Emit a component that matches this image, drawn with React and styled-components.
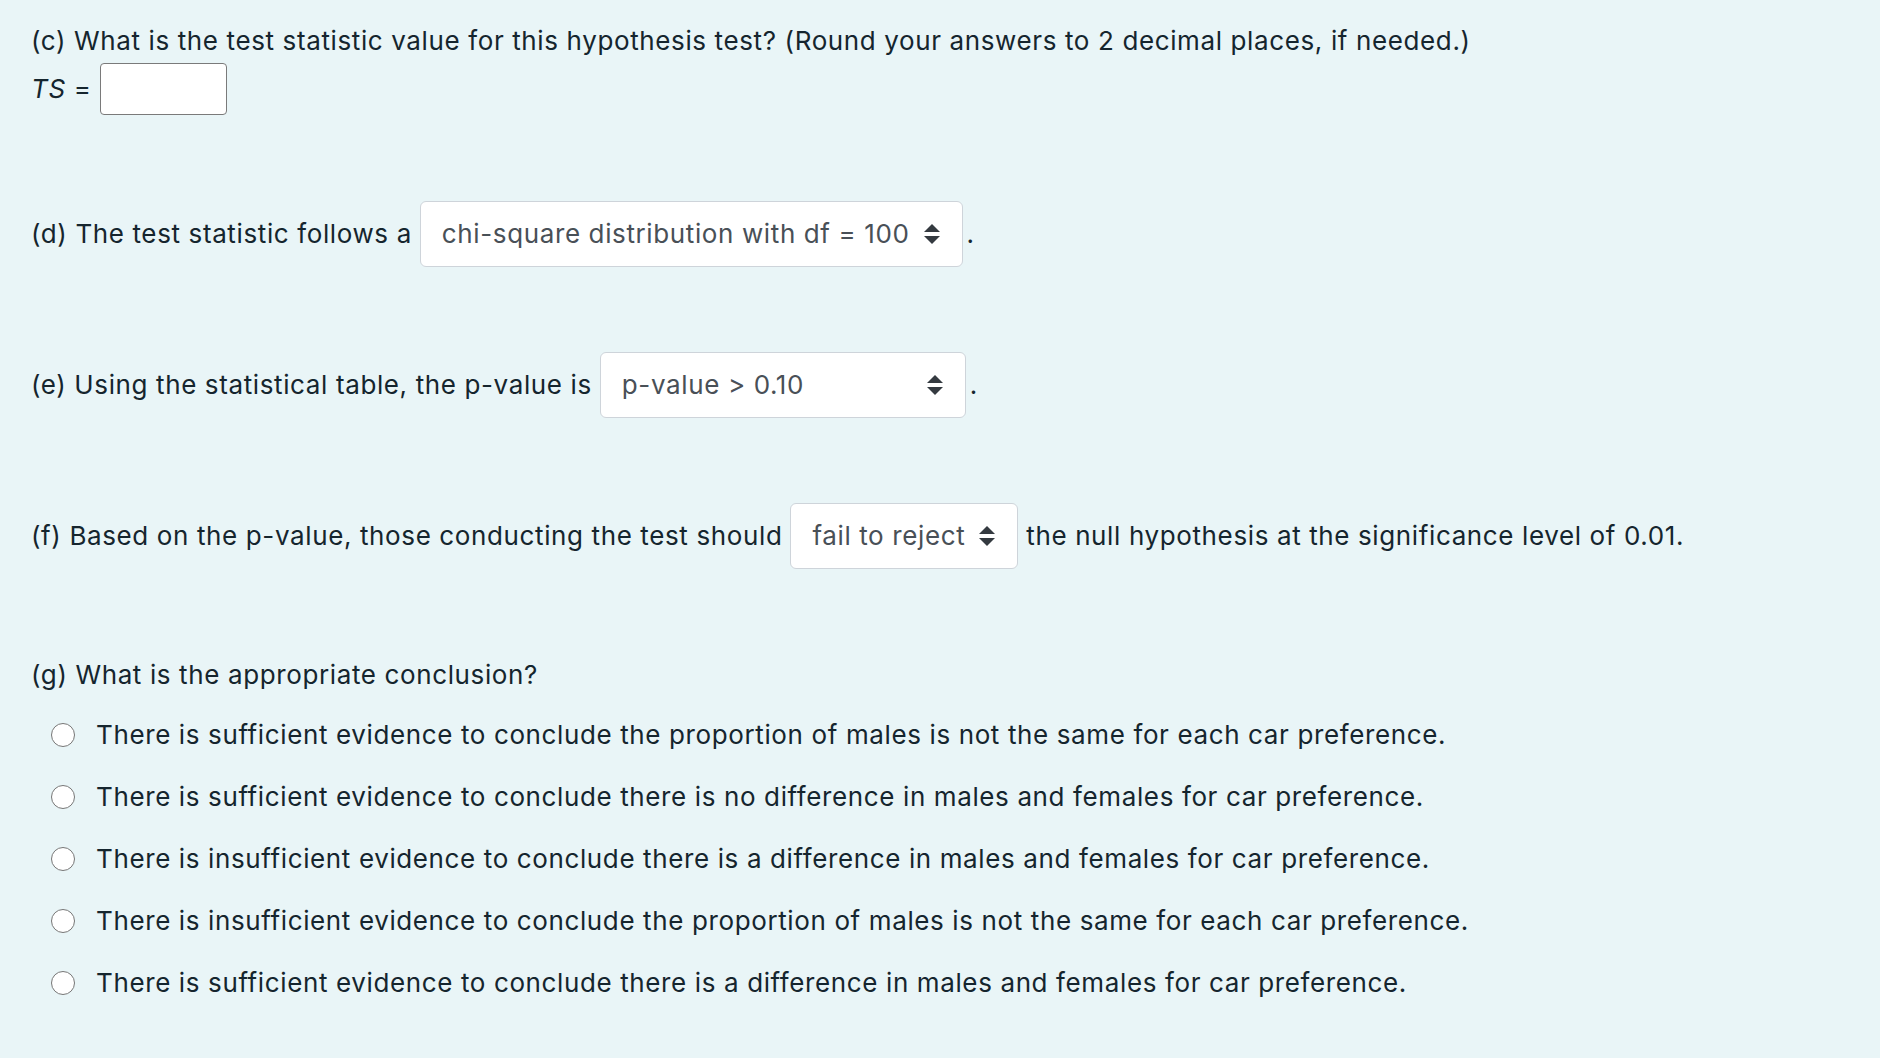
import React from 'react';
import styled, { createGlobalStyle } from 'styled-components';

const GlobalStyle = createGlobalStyle`
  html, body {
    margin: 0;
    padding: 0;
    background: #e9f5f7;
  }
  body {
    font-family: Inter, "Liberation Sans", Arial, sans-serif;
    color: #15252e;
  }
`;

const Page = styled.div`
  min-height: 1058px;
  box-sizing: border-box;
  padding: 22px 31px;
  background: #e9f5f7;
  font-size: 26px;
  letter-spacing: 0.62px;
`;

const Line = styled.div`
  display: flex;
  align-items: center;
  min-height: 38px;
  line-height: 38px;
  white-space: nowrap;
  margin-top: ${p => p.$top || 0}px;
`;

const Italic = styled.span`
  font-style: italic;
`;

const TextInput = styled.div`
  width: 127px;
  height: 52px;
  box-sizing: border-box;
  margin-left: 9px;
  background: #fff;
  border: 1.5px solid #7a7a7a;
  border-radius: 4px;
`;

const Select = styled.div`
  display: flex;
  align-items: center;
  justify-content: space-between;
  gap: 14px;
  box-sizing: border-box;
  width: ${p => (p.$width ? `${p.$width}px` : 'auto')};
  height: 66px;
  margin: 0 ${p => p.$after}px 0 8px;
  padding: 0 22px 0 21px;
  background: #fff;
  border: 1.5px solid #ced4da;
  border-radius: 6px;
  color: #495057;
`;

const Arrows = () => (
  <svg width="16" height="20" viewBox="0 0 16 20" style={{ flex: 'none' }}>
    <path d="M8 0 L16 8 L0 8 Z" fill="#343a40" />
    <path d="M0 12 L16 12 L8 20 Z" fill="#343a40" />
  </svg>
);

const Options = styled.div`
  display: flex;
  flex-direction: column;
  gap: 24px;
  margin-top: 22px;
  padding-left: 20px;
`;

const Option = styled.label`
  display: flex;
  align-items: center;
  line-height: 38px;
  white-space: nowrap;
`;

const Radio = styled.span`
  width: 24px;
  height: 24px;
  box-sizing: border-box;
  border-radius: 50%;
  border: 1.5px solid #767676;
  background: #fff;
  margin-right: 21px;
  flex: none;
`;

const options = [
  'There is sufficient evidence to conclude the proportion of males is not the same for each car preference.',
  'There is sufficient evidence to conclude there is no difference in males and females for car preference.',
  'There is insufficient evidence to conclude there is a difference in males and females for car preference.',
  'There is insufficient evidence to conclude the proportion of males is not the same for each car preference.',
  'There is sufficient evidence to conclude there is a difference in males and females for car preference.',
];

export default function App() {
  return (
    <Page>
      <GlobalStyle />
      <Line>(c) What is the test statistic value for this hypothesis test? (Round your answers to 2 decimal places, if needed.)</Line>
      <Line $top={3}>
        <span><Italic>TS</Italic> =</span>
        <TextInput />
      </Line>

      <Line $top={86}>
        (d) The test statistic follows a
        <Select $after={4}>
          <span>chi-square distribution with df = 100</span>
          <Arrows />
        </Select>
        .
      </Line>

      <Line $top={85}>
        (e) Using the statistical table, the p-value is
        <Select $width={366} $after={4}>
          <span>p-value &gt; 0.10</span>
          <Arrows />
        </Select>
        .
      </Line>

      <Line $top={85}>
        (f) Based on the p-value, those conducting the test should
        <Select $after={8}>
          <span>fail to reject</span>
          <Arrows />
        </Select>
        the null hypothesis at the significance level of 0.01.
      </Line>

      <Line $top={87}>(g) What is the appropriate conclusion?</Line>
      <Options>
        {options.map((o, i) => (
          <Option key={i}>
            <Radio />
            {o}
          </Option>
        ))}
      </Options>
    </Page>
  );
}
